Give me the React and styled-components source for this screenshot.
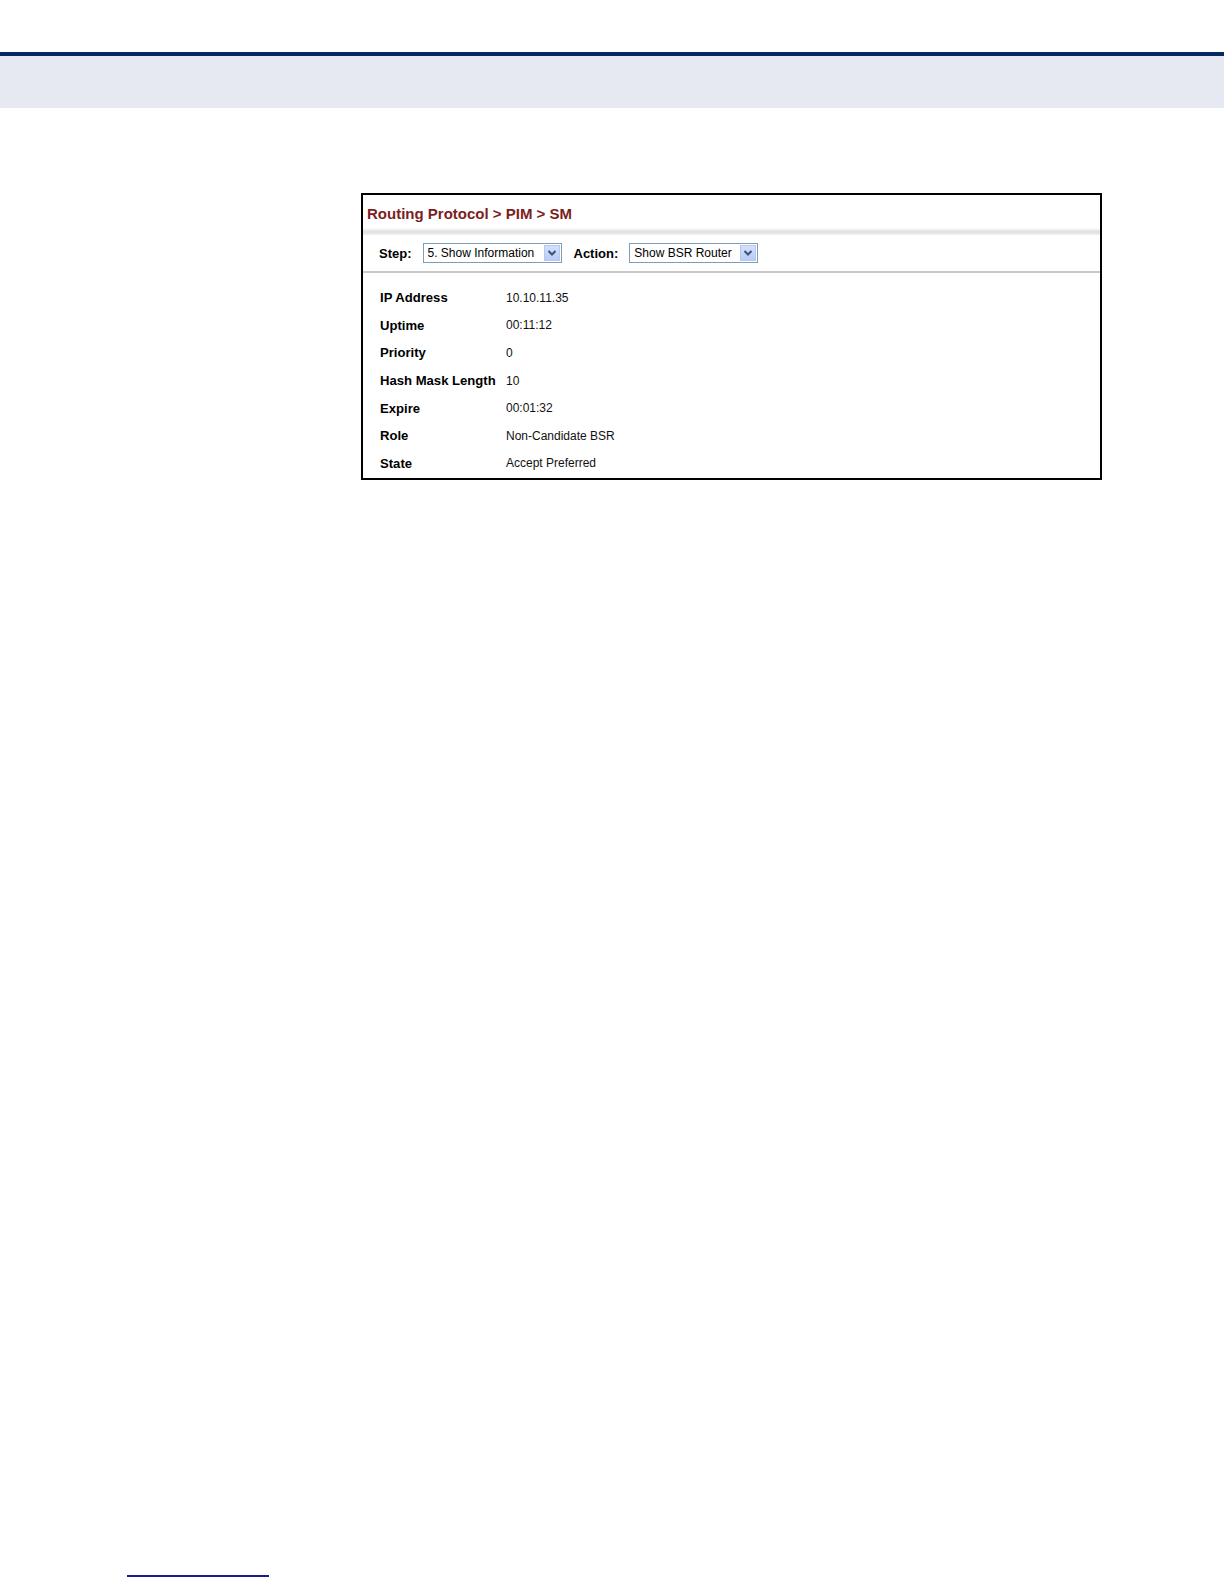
import React from "react";
import styled, { createGlobalStyle } from "styled-components";

const Global = createGlobalStyle`
  html, body { margin: 0; padding: 0; background: #ffffff; }
  body { font-family: "Liberation Sans", Arial, sans-serif; color: #000; }
`;

const Page = styled.div`
  min-height: 1584px;
  display: flex;
  flex-direction: column;
  box-sizing: border-box;
  padding-top: 52px;
`;

const HeaderBar = styled.div`
  height: 4px;
  background: #062a60;
`;

const HeaderBand = styled.div`
  height: 52px;
  background: #e6e9f1;
`;

const Content = styled.div`
  padding: 85px 0 0 361px;
`;

const Panel = styled.section`
  width: 741px;
  box-sizing: border-box;
  border: 2px solid #000;
  background: #fff;
`;

const TitleRow = styled.div`
  height: 33px;
  display: flex;
  align-items: center;
  padding: 4px 0 0 4px;
  box-sizing: border-box;
  font-size: 15px;
  font-weight: bold;
  color: #7a1e1e;
`;

const TitleShade = styled.div`
  height: 7px;
  background: linear-gradient(#ffffff, #dedede 55%, #f2f2f2);
`;

const Toolbar = styled.div`
  height: 36px;
  display: flex;
  align-items: center;
  padding-left: 16px;
  border-bottom: 2px solid #c8c8c8;
`;

const ToolLabel = styled.span`
  font-size: 13px;
  font-weight: bold;
  margin-right: ${(p) => p.$gap}px;
`;

const Select = styled.div`
  width: ${(p) => p.$w}px;
  height: 20px;
  box-sizing: border-box;
  border: 1px solid #7f9db9;
  display: flex;
  align-items: center;
  justify-content: space-between;
  padding: 0 1px 0 4px;
  margin-right: ${(p) => p.$gap || 0}px;
  font-size: 12px;
  background: #fff;
`;

const SelectText = styled.span`
  white-space: nowrap;
`;

const ArrowBox = styled.span`
  width: 16px;
  height: 16px;
  box-sizing: border-box;
  border: 1px solid #b5c8ef;
  background: linear-gradient(#d3e0fc, #b8cbf6);
  display: flex;
  align-items: center;
  justify-content: center;
`;

const InfoList = styled.div`
  padding: 11px 0 1px 17px;
  display: grid;
  grid-template-columns: 126px 1fr;
  grid-auto-rows: 27.6px;
  align-items: center;
`;

const Label = styled.div`
  font-size: 13.1px;
  font-weight: bold;
  white-space: nowrap;
`;

const Value = styled.div`
  font-size: 12px;
  color: #111;
  white-space: nowrap;
`;

const Footer = styled.div`
  margin-top: auto;
  padding: 0 0 7px 127px;
`;

const FooterLine = styled.div`
  width: 142px;
  height: 2px;
  background: #1c1c8c;
`;

const Arrow = () => (
  <ArrowBox>
    <svg width="10" height="8" viewBox="0 0 10 8">
      <path d="M1.5 2 L5 5.5 L8.5 2" fill="none" stroke="#3d5177" strokeWidth="2" />
    </svg>
  </ArrowBox>
);

const rows = [
  ["IP Address", "10.10.11.35"],
  ["Uptime", "00:11:12"],
  ["Priority", "0"],
  ["Hash Mask Length", "10"],
  ["Expire", "00:01:32"],
  ["Role", "Non-Candidate BSR"],
  ["State", "Accept Preferred"],
];

export default function App() {
  return (
    <>
      <Global />
      <Page>
        <HeaderBar />
        <HeaderBand />
        <Content>
          <Panel>
            <TitleRow>Routing Protocol &gt; PIM &gt; SM</TitleRow>
            <TitleShade />
            <Toolbar>
              <ToolLabel $gap={11}>Step:</ToolLabel>
              <Select $w={139} $gap={12}>
                <SelectText>5. Show Information</SelectText>
                <Arrow />
              </Select>
              <ToolLabel $gap={11}>Action:</ToolLabel>
              <Select $w={129}>
                <SelectText>Show BSR Router</SelectText>
                <Arrow />
              </Select>
            </Toolbar>
            <InfoList>
              {rows.map(([k, v]) => (
                <React.Fragment key={k}>
                  <Label>{k}</Label>
                  <Value>{v}</Value>
                </React.Fragment>
              ))}
            </InfoList>
          </Panel>
        </Content>
        <Footer>
          <FooterLine />
        </Footer>
      </Page>
    </>
  );
}
